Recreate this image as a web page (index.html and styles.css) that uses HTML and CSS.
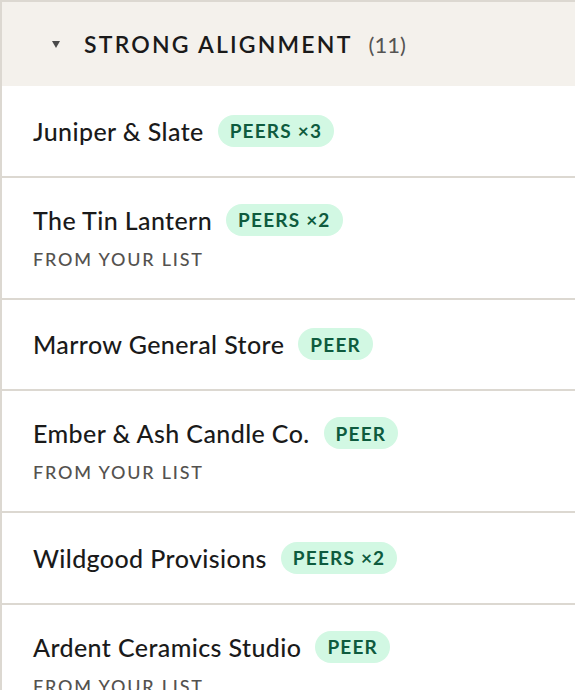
FILE: index.html
```html
<!DOCTYPE html>
<html lang="en">
<head>
<meta charset="utf-8">
<title>Strong alignment</title>
<link rel="stylesheet" href="styles.css">
</head>
<body>
<section class="group">
  <header class="group-head">
    <span class="caret"></span>
    <span class="group-title">STRONG ALIGNMENT</span>
    <span class="group-count">(11)</span>
  </header>
  <ul class="rows">
    <li class="row">
      <div class="row-main"><span class="name">Juniper &amp; Slate</span><span class="badge">PEERS ×3</span></div>
    </li>
    <li class="row">
      <div class="row-main"><span class="name">The Tin Lantern</span><span class="badge">PEERS ×2</span></div>
      <div class="sub">FROM YOUR LIST</div>
    </li>
    <li class="row">
      <div class="row-main"><span class="name">Marrow General Store</span><span class="badge">PEER</span></div>
    </li>
    <li class="row">
      <div class="row-main"><span class="name">Ember &amp; Ash Candle Co.</span><span class="badge">PEER</span></div>
      <div class="sub">FROM YOUR LIST</div>
    </li>
    <li class="row">
      <div class="row-main"><span class="name">Wildgood Provisions</span><span class="badge">PEERS ×2</span></div>
    </li>
    <li class="row">
      <div class="row-main"><span class="name">Ardent Ceramics Studio</span><span class="badge">PEER</span></div>
      <div class="sub">FROM YOUR LIST</div>
    </li>
  </ul>
</section>
</body>
</html>
```

FILE: styles.css
```css
html, body {
  margin: 0;
  padding: 0;
  background: #ffffff;
}
body {
  font-family: "Lato", "Noto Sans", sans-serif;
  color: #1a1a1a;
}
.group {
  border-top: 2px solid #dcd8d1;
  border-left: 2px solid #dcd8d1;
}
.group-head {
  display: flex;
  align-items: center;
  height: 84px;
  background: #f4f1ec;
  padding-left: 50px;
}
.caret {
  width: 0;
  height: 0;
  border-left: 4px solid transparent;
  border-right: 4px solid transparent;
  border-top: 7px solid #4a4a4a;
  margin-right: 24px;
  margin-top: 1px;
}
.group-title {
  font-size: 23px;
  font-weight: 600;
  letter-spacing: 2.2px;
  color: #1a1a1a;
}
.group-count {
  margin-left: 16px;
  font-size: 22px;
  color: #555453;
}
.rows {
  list-style: none;
  margin: 0;
  padding: 0;
}
.row {
  box-sizing: border-box;
  min-height: 91.5px;
  display: flex;
  flex-direction: column;
  justify-content: center;
  padding: 26px 31px;
  border-bottom: 2px solid #dcd8d1;
}
.row-main {
  display: flex;
  align-items: center;
  gap: 14px;
  height: 32px;
}
.name {
  font-size: 25px;
  font-weight: 500;
  letter-spacing: 0.4px;
  color: #1a1a1a;
}
.badge {
  display: inline-flex;
  align-items: center;
  height: 32px;
  padding: 0 12px;
  border-radius: 16px;
  background: #d2f8e3;
  color: #0e5b3e;
  font-size: 19px;
  font-weight: 700;
  letter-spacing: 1.2px;
}
.sub {
  margin-top: 10px;
  line-height: 26px;
  font-size: 18px;
  font-weight: 500;
  letter-spacing: 1.8px;
  color: #54524f;
}
```
